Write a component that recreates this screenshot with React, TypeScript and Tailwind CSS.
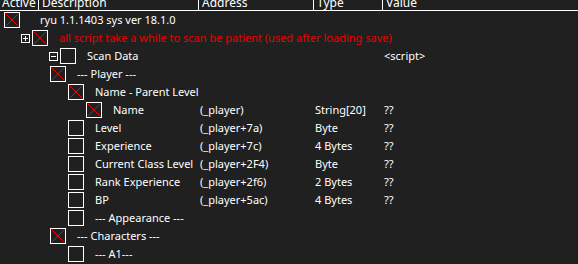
const rows = [
  { indent: 4, box: "x", text: "ryu 1.1.1403 sys ver 18.1.0" },
  { indent: 21, exp: "+", box: "x", text: "all script take a while to scan be patient (used after loading save)", red: true },
  { indent: 49, exp: "-", box: "empty", text: "Scan Data", value: "<script>" },
  { indent: 50, box: "x", text: "--- Player ---" },
  { indent: 68, box: "x", text: "Name - Parent Level" },
  { indent: 86, box: "x", text: "Name", address: "(_player)", type: "String[20]", value: "??" },
  { indent: 68, box: "empty", text: "Level", address: "(_player+7a)", type: "Byte", value: "??" },
  { indent: 68, box: "empty", text: "Experience", address: "(_player+7c)", type: "4 Bytes", value: "??" },
  { indent: 68, box: "empty", text: "Current Class Level", address: "(_player+2F4)", type: "Byte", value: "??" },
  { indent: 68, box: "empty", text: "Rank Experience", address: "(_player+2f6)", type: "2 Bytes", value: "??" },
  { indent: 68, box: "empty", text: "BP", address: "(_player+5ac)", type: "4 Bytes", value: "??" },
  { indent: 68, box: "empty", text: "--- Appearance ---" },
  { indent: 50, box: "x", text: "--- Characters ---" },
  { indent: 68, box: "empty", text: "--- A1---" },
];

function Check({ x }: { x: boolean }) {
  return (
    <div className="w-[16px] h-[16px] border border-white shrink-0 bg-[#202020]">
      {x && (
        <svg width="14" height="14" viewBox="0 0 14 14">
          <line x1="1" y1="1" x2="13" y2="13" stroke="#ff0000" strokeWidth="1" />
          <line x1="13" y1="1" x2="1" y2="13" stroke="#ff0000" strokeWidth="1" />
        </svg>
      )}
    </div>
  );
}

function Expander({ sign }: { sign: string }) {
  return (
    <div className="w-[9px] h-[9px] border border-white shrink-0 mr-[2px] flex items-center justify-center relative">
      <div className="w-[5px] h-px bg-white" />
      {sign === "+" && <div className="absolute w-px h-[5px] bg-white" />}
    </div>
  );
}

export default function App() {
  return (
    <div
      className="w-[578px] h-[264px] bg-[#202020] text-white text-[11px] overflow-hidden"
      style={{ fontFamily: '"Noto Sans", "Open Sans", sans-serif' }}
    >
      <div className="h-[11px] border-b border-white flex overflow-hidden leading-[12px] text-[12px]">
        <div className="w-[39px] pl-[2px] -mt-[3px] border-r border-white">Active</div>
        <div className="w-[160px] pl-[3px] -mt-[3px] border-r border-white">Description</div>
        <div className="w-[115px] pl-[3px] -mt-[3px] border-r border-white">Address</div>
        <div className="w-[69px] pl-[3px] -mt-[3px] border-r border-white">Type</div>
        <div className="flex-1 pl-[3px] -mt-[3px]">Value</div>
      </div>
      {rows.map((r, i) => (
        <div key={i} className="h-[18px] flex items-center whitespace-nowrap">
          <div className="w-[200px] flex items-center" style={{ paddingLeft: r.indent }}>
            {r.exp && <Expander sign={r.exp} />}
            <Check x={r.box === "x"} />
            <span
              className={r.red ? "ml-[11px] text-[#e80000]" : "ml-[11px]"}
              style={i === 0 ? { marginLeft: 20 } : undefined}
            >
              {r.text}
            </span>
          </div>
          <div className="w-[115px]">{r.address}</div>
          <div className="w-[69px]">{r.type}</div>
          <div className="flex-1">{r.value}</div>
        </div>
      ))}
    </div>
  );
}
